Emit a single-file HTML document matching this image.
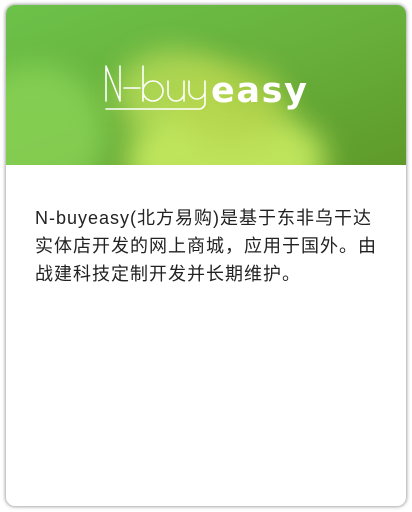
<!DOCTYPE html>
<html><head><meta charset="utf-8"><style>
html,body{margin:0;padding:0;background:#fff;width:412px;height:512px;overflow:hidden}
.card{position:absolute;left:6px;top:5px;width:400px;height:501px;border-radius:9px;background:#fff;box-shadow:0 0 3px 1px rgba(0,0,0,.35);overflow:hidden}
.hdr{position:absolute;left:0;top:0;width:400px;height:160px;background:linear-gradient(160deg,#6cc24a 0%,#68b03c 50%,#5e9a2a 100%);overflow:hidden}
.c{position:absolute;border-radius:50%;filter:blur(14px)}
.logo{position:absolute;left:0;top:0;width:400px;height:160px}
.txt{position:absolute;left:29px;top:199px;width:380px;white-space:nowrap;font:18px/28px "Liberation Sans","Noto Sans CJK SC",sans-serif;color:#222;letter-spacing:1px}
</style></head><body>
<div class="card">
<div class="hdr">
<div class="c" style="left:-40px;top:60px;width:140px;height:140px;background:#8fd95a;opacity:.7"></div>
<div class="c" style="left:110px;top:45px;width:120px;height:90px;background:#b9dc58;opacity:.85"></div>
<div class="c" style="left:120px;top:100px;width:200px;height:110px;background:#c3e85e;opacity:.95"></div>
<div class="c" style="left:170px;top:60px;width:110px;height:80px;background:#b5d44c;opacity:.8"></div>
<svg class="logo" viewBox="0 0 400 160">
<g fill="none" stroke="#fff" stroke-width="1.6" stroke-linecap="round" stroke-linejoin="round">
<path d="M100 96 V61 L114 96 V61"/>
<path d="M118 83 H134"/>
<path d="M137 61 V96 M137 86 a10 10 0 1 0 20 0 a10 10 0 1 0 -20 0"/>
<path d="M162 76 V88 a8 8 0 0 0 16 0 V76 M178 88 V96"/>
<path d="M183 76 V86 a8 8 0 0 0 16 0 V76 V98 a6 6 0 0 1 -6 6 H100"/>
</g>
<text x="205" y="97" fill="#fff" font-family="'DejaVu Sans','Liberation Sans',sans-serif" font-weight="bold" font-size="35" letter-spacing="0" textLength="96">easy</text>
</svg>
</div>
<div class="txt">N-buyeasy(北方易购)是基于东非乌干达<br>实体店开发的网上商城，应用于国外。由<br>战建科技定制开发并长期维护。</div>
</div>
</body></html>
